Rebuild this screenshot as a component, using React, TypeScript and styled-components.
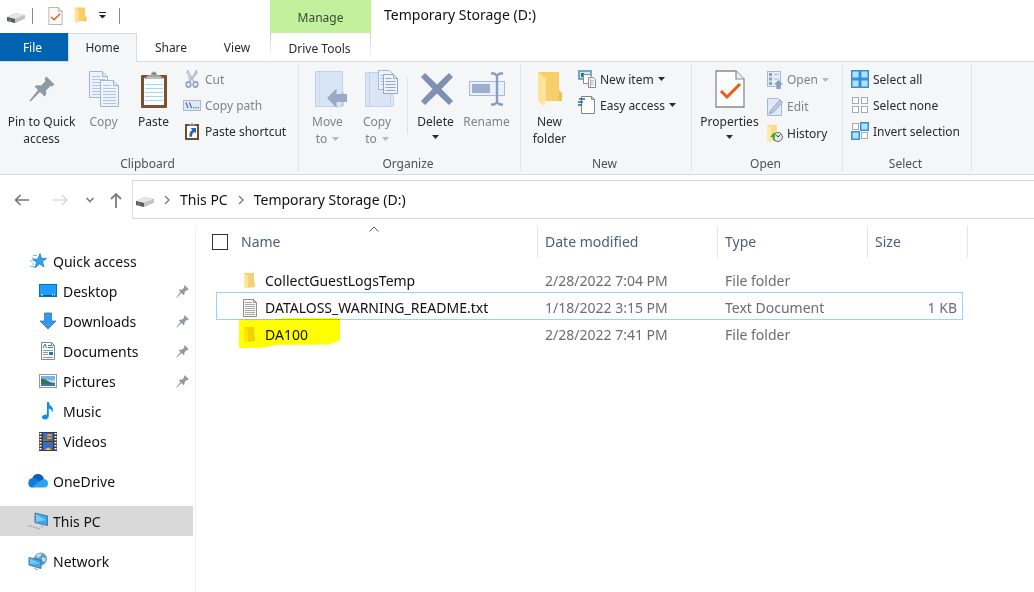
import React from "react";
import styled, { createGlobalStyle } from "styled-components";

const GlobalStyle = createGlobalStyle`
  *, *::before, *::after { box-sizing: border-box; }
  body {
    margin: 0;
    background: #fff;
    color: #111;
    font-family: "Segoe UI", "Noto Sans", "Open Sans", sans-serif;
    font-size: 14px;
    line-height: 20px;
  }
  button {
    font: inherit;
    color: inherit;
    border: 0;
    padding: 0;
    background: none;
  }
  a { color: inherit; text-decoration: none; }
  svg { display: block; flex: none; }
`;

/* ---------- header ---------- */

const Header = styled.header`
  display: flex;
  height: 62px;
  border-bottom: 1px solid #dadbdc;
`;

const HeaderLeft = styled.div`
  width: 270px;
  flex: none;
`;

const QuickToolbar = styled.div`
  display: flex;
  align-items: center;
  height: 33px;
  padding: 0 0 2px 6px;
`;

const ToolButton = styled.button<{ $gap?: number }>`
  display: flex;
  margin-left: ${(p) => p.$gap ?? 0}px;
`;

const ToolDivider = styled.span<{ $gap: number }>`
  width: 1px;
  height: 16px;
  margin-left: ${(p) => p.$gap}px;
  background: #8a8a8a;
`;

const Tabs = styled.div`
  display: grid;
  grid-template-columns: 68px 69px 68px 64px;
  height: 29px;
  font-size: 12px;
`;

const Tab = styled.button<{ $kind?: "file" | "active" }>`
  height: ${(p) => (p.$kind === "active" ? 29 : 28)}px;
  padding-top: ${(p) => (p.$kind === "active" ? 0 : 2)}px;
  padding-right: ${(p) => (p.$kind === "file" ? 3 : 0)}px;
  color: ${(p) => (p.$kind === "file" ? "#fff" : "#2b2b2b")};
  background: ${(p) =>
    p.$kind === "file" ? "#0063b1" : p.$kind === "active" ? "#f5f6f7" : "transparent"};
  border: solid #dadbdc;
  border-width: ${(p) => (p.$kind === "active" ? "1px 1px 0" : "0")};
`;

const ContextTabs = styled.div`
  display: flex;
  flex-direction: column;
  width: 101px;
  font-size: 12px;
  text-align: center;
`;

const ContextTitle = styled.div`
  height: 33px;
  line-height: 35px;
  background: #c2f09c;
  color: #3c4a33;
`;

const ContextTab = styled.button`
  height: 24px;
  padding: 6px 2px 0 0;
  color: #2b2b2b;
  border: solid;
  border-width: 0 1px;
  border-image: linear-gradient(#c4c4c4, #fff) 1;
`;

const Title = styled.h1`
  margin: 0;
  padding: 5px 0 0 13px;
  font-size: 14px;
  font-weight: 400;
  line-height: 20px;
`;

/* ---------- ribbon ---------- */

const Ribbon = styled.section`
  display: flex;
  height: 113px;
  padding: 2px 0 3px;
  background: #f5f6f7;
  border-bottom: 1px solid #dadbdc;
  font-size: 12px;
  line-height: 17px;
  color: #2b2b2b;
`;

const Group = styled.div<{ $width: number }>`
  display: flex;
  flex-direction: column;
  justify-content: space-between;
  width: ${(p) => p.$width}px;
  border-right: 1px solid #e2e3e4;
`;

const GroupBody = styled.div<{ $indent?: number }>`
  display: flex;
  align-items: flex-start;
  height: 91px;
  padding-left: ${(p) => p.$indent ?? 0}px;
`;

const Caption = styled.div`
  padding-right: 3px;
  text-align: center;
  line-height: 15px;
  color: #505050;
`;

const BigButton = styled.button<{ $width: number }>`
  display: flex;
  flex-direction: column;
  align-items: center;
  width: ${(p) => p.$width}px;
  padding-top: 5px;
  white-space: nowrap;
  &:disabled { color: #838383; }
`;

const BigIcon = styled.span`
  display: flex;
  align-items: center;
  height: 40px;
  margin-bottom: 4px;
`;

const WordWithArrow = styled.span`
  display: flex;
  align-items: center;
  gap: 5px;
  min-height: 14px;
`;

const BodyDivider = styled.span`
  width: 1px;
  height: 56px;
  margin: 14px 2px 0 5px;
  background: #e2e3e4;
`;

const SmallColumn = styled.div<{ $row?: number }>`
  display: grid;
  grid-auto-rows: ${(p) => p.$row ?? 26}px;
  padding-top: 2px;
`;

const SmallButton = styled.button`
  display: flex;
  align-items: center;
  gap: 4px;
  white-space: nowrap;
  &:disabled { color: #838383; }
`;

/* ---------- address bar ---------- */

const AddressRow = styled.div`
  display: flex;
  height: 48px;
  padding-top: 5px;
`;

const NavButtons = styled.div`
  display: flex;
  align-items: center;
  width: 132px;
  height: 39px;
  padding-left: 14px;
  flex: none;
`;

const NavButton = styled.button<{ $gap?: number }>`
  display: flex;
  margin-left: ${(p) => p.$gap ?? 0}px;
`;

const Address = styled.nav`
  display: flex;
  align-items: center;
  flex: 1;
  height: 39px;
  padding-left: 2px;
  border: 1px solid #d9d9d9;
  border-right: 0;
`;

const Crumb = styled.a`
  margin: 0 10px 0 9px;
`;

const CrumbArrow = styled.span`
  display: flex;
  margin-left: 9px;
  & + ${Crumb} { margin-left: 10px; }
  ${Crumb} + & { margin-left: 0; }
`;

/* ---------- content ---------- */

const Content = styled.div`
  display: flex;
  padding-top: 3px;
`;

const Sidebar = styled.nav`
  width: 196px;
  flex: none;
  min-height: 366px;
  padding: 20px 2px 0 0;
  border-right: 1px solid #f0f0f0;
`;

const SideItem = styled.a<{ $level?: number; $spaced?: boolean; $current?: boolean }>`
  display: flex;
  align-items: center;
  gap: 5px;
  height: 30px;
  margin-top: ${(p) => (p.$spaced ? 10 : 0)}px;
  padding: 0 4px 0 ${(p) => (p.$level ? 38 : 28)}px;
  background: ${(p) => (p.$current ? "#d9d9d9" : "transparent")};
`;

const SideLabel = styled.span`
  flex: 1;
  padding-top: 2px;
`;

const Files = styled.main`
  flex: 1;
  min-width: 0;
`;

const FileTable = styled.table`
  width: 772px;
  table-layout: fixed;
  border-spacing: 0;
`;

const HeadCell = styled.th`
  padding: 0 0 8px;
  font-weight: 400;
  text-align: left;
  color: #4c607a;
`;

const HeadInner = styled.div<{ $first?: boolean }>`
  position: relative;
  display: flex;
  align-items: center;
  gap: 13px;
  height: 32px;
  padding-left: ${(p) => (p.$first ? 16 : 7)}px;
  border-right: 1px solid #e5e5e5;
`;

const SortMark = styled.svg`
  position: absolute;
  top: 0;
  left: 173px;
`;

const Check = styled.input`
  appearance: none;
  width: 16px;
  height: 16px;
  margin: 0;
  border: 1px solid #333;
  background: #fff;
`;

const Cell = styled.td`
  height: 27px;
  padding: 2px 0 0 7px;
  color: #6d6d6d;
  white-space: nowrap;
`;

const NameCell = styled(Cell)`
  padding-left: 26px;
  color: #111;
`;

const SizeCell = styled(Cell)`
  padding-right: 5px;
  text-align: right;
`;

const Gutter = styled.td`
  padding: 0;
`;

const FileRow = styled.tr<{ $selected?: boolean }>`
  ${(p) =>
    p.$selected &&
    `
    ${Cell} { box-shadow: 0 -1px #99d1ff, inset 0 -1px #99d1ff; }
    ${NameCell} { border-left: 1px solid #99d1ff; padding-left: 25px; }
    ${SizeCell} { border-right: 1px solid #99d1ff; }
  `}
`;

const FileName = styled.span`
  position: relative;
  display: flex;
  align-items: center;
  gap: 7px;
`;

const Marker = styled.svg`
  position: absolute;
  top: -7px;
  left: -3px;
  mix-blend-mode: multiply;
`;

/* ---------- icons ---------- */

const DriveIcon = () => (
  <svg width="20" height="16" viewBox="0 0 20 16">
    <path d="M1 9 9 5 19 7v3.500L9 15 1 13z" fill="#b9b9b9" />
    <path d="M1 9 9 5 19 7 9 11z" fill="#e6e6e6" />
    <path d="M1 9 9 11v4L1 13z" fill="#5c5c5c" />
    <path d="M9 11 19 7v3.500L9 15z" fill="#c4c4c4" />
    <path d="M3 11.500h2V13H3z" fill="#2fc15a" />
  </svg>
);

const PropertiesIcon = ({ width = 30, height = 38 }: { width?: number; height?: number }) => (
  <svg width={width} height={height} viewBox="0 0 30 38">
    <path d="M1 1h20l8 8v28H1z" fill="#fcfcfc" stroke="#8b8b8b" strokeWidth="1.300" />
    <path d="M21 1v8h8" fill="#ececec" stroke="#8b8b8b" strokeWidth="1.200" />
    <path d="M6 21l6 6L25 14" fill="none" stroke="#f0590e" strokeWidth="3" />
  </svg>
);

const FolderIcon = ({ width = 13, height = 18 }: { width?: number; height?: number }) => (
  <svg width={width} height={height} viewBox="0 0 26 36" preserveAspectRatio="none">
    <path d="M1 1h21v18l2 3v8H8z" fill="#f6cf6a" />
    <path d="M22 19v5l-1 6h4v-8z" fill="#edc157" />
    <path d="M1 1l8 6v22l-2 6-6-5z" fill="#ffe497" />
  </svg>
);

const Arrow = () => (
  <svg width="7" height="4" viewBox="0 0 7 4">
    <path d="M0 0h7L3.500 4z" fill="currentColor" />
  </svg>
);

const FaintArrow = () => (
  <svg width="7" height="4" viewBox="0 0 7 4">
    <path d="M0 0h7L3.500 4z" fill="#b9b9b9" />
  </svg>
);

const CustomizeIcon = () => (
  <svg width="8" height="7" viewBox="0 0 8 7">
    <path d="M0 0h7v1H0zM0 3h7L3.500 6.500z" fill="#222" />
  </svg>
);

const PinIcon = ({ size = 26 }: { size?: number }) => (
  <svg width={size} height={size} viewBox="0 0 26 26">
    <path
      d="M17.500 0.500 25.500 8.500 23 10.500 21.500 10 17 14.500Q18 18 15.500 20.500L11 16 2 25 0.500 25.500 1 24 9 14 5.500 10.500Q8 8.500 12 9.500L16.500 5 15.500 3z"
      fill="#8f9aa3"
    />
  </svg>
);

const Sheet = ({ x, y }: { x: number; y: number }) => (
  <g transform={`translate(${x} ${y})`}>
    <path d="M.5.500h13l5 5v21H.5z" fill="#edf3fb" stroke="#9fb3d3" />
    <path d="M13.500.500v5h5" fill="#dfe8f5" stroke="#9fb3d3" />
    <path d="M3 5.500h8M3 8.500h13M3 11.500h13M3 14.500h13M3 17.500h13M3 20.500h13M3 23.500h13" stroke="#b4c4de" />
  </g>
);

const CopyIcon = () => (
  <svg width="30" height="37" viewBox="0 0 30 37">
    <Sheet x={0} y={0} />
    <Sheet x={11} y={9} />
  </svg>
);

const PasteIcon = () => (
  <svg width="26" height="37" viewBox="0 0 26 37">
    <rect x="0" y="4" width="26" height="33" rx="1" fill="#7a5230" />
    <rect x="3" y="7" width="20" height="27" fill="#fafdff" />
    <path d="M4 13.500h18M4 17.500h18M4 21.500h18M4 25.500h18M4 29.500h18" stroke="#a9d4ee" />
    <path d="M4 8q1-4 6-4a3 3.500 0 0 1 6 0q5 0 6 4z" fill="#a6a6a6" />
    <path d="M6 7h14" stroke="#d8d8d8" />
    <circle cx="13" cy="2.800" r="1" fill="#666" />
  </svg>
);

const CutIcon = () => (
  <svg width="18" height="18" viewBox="0 0 18 18">
    <path d="M4.500 0 9 8l4.500-8 .5 3-8 10M4.500 0 4 3l8 10" fill="#c5cfdf" stroke="#a5b4ca" />
    <ellipse cx="5.500" cy="14.500" rx="2.300" ry="2.600" fill="none" stroke="#8fa3c4" strokeWidth="1.600" />
    <ellipse cx="12.500" cy="14.500" rx="2.300" ry="2.600" fill="none" stroke="#8fa3c4" strokeWidth="1.600" />
  </svg>
);

const CopyPathIcon = () => (
  <svg width="18" height="18" viewBox="0 0 18 18">
    <rect x=".5" y="4.500" width="17" height="10" fill="#dfe8f5" stroke="#a8b9d6" />
    <path d="M3 6.500l2 5.500M6.500 6.500l2 5.500" stroke="#5b6f91" strokeWidth="1.200" />
    <path d="M10 11h1.200v1.200H10zM12.400 11h1.200v1.200h-1.200zM14.800 11H16v1.200h-1.200z" fill="#5b6f91" />
  </svg>
);

const PasteShortcutIcon = () => (
  <svg width="18" height="18" viewBox="0 0 18 18">
    <rect x="2" y="2" width="14" height="16" fill="#704c2f" />
    <rect x="4" y="4" width="10" height="12" fill="#fff" />
    <path d="M5 3.500Q6 2 8 2q1-3 2 0 2 0 3 1.500z" fill="#9d9d9d" />
    <path d="M7.500 6H13v5.500l-1.700-1.700q-2.500 1.700-2.300 5H6.500q-.7-4.500 2.800-7z" fill="#2467ad" />
  </svg>
);

const MoveToIcon = () => (
  <svg width="40" height="38" viewBox="-6 0 40 38">
    <path d="M1.500 1.500h27v35h-27z" fill="#d9e5f4" stroke="#c3d2e8" />
    <path d="M5.500 2v34" stroke="#cfdcee" />
    <path d="M27 22h3v14h-3z" fill="#c3d2e8" />
    <path d="M13 28 22.500 18.500V24H33v8H22.500v6z" fill="#9aaac6" />
  </svg>
);

const CopyToIcon = () => (
  <svg width="42" height="38" viewBox="-8 0 42 38">
    <path d="M1.500 2.500h25v34h-25z" fill="#d9e5f4" stroke="#c3d2e8" />
    <path d="M5.500 3v33M26.500 24q3-1 3 3v9h-3z" fill="#dfe9f6" stroke="#c3d2e8" />
    <path d="M14.500.500h11l4 4v15h-15z" fill="#edf3fb" stroke="#a6b8d6" />
    <path d="M16.500 5.500h3M16.500 8.500h3M16.500 11.500h3M16.500 14.500h3" stroke="#a9bbd8" />
    <path d="M19.500 4.500h10l4 4v15h-14z" fill="#edf3fb" stroke="#93a7c9" />
    <path d="M29.500 4.500v4h4" fill="none" stroke="#93a7c9" />
    <path d="M21.500 8.500h6M21.500 11.500h10M21.500 14.500h10M21.500 17.500h10M21.500 20.500h10" stroke="#94a8c9" />
  </svg>
);

const DeleteIcon = () => (
  <svg width="34" height="32" viewBox="-2 0 34 32">
    <path d="M0 4 4 0 16 11.500 28 0 32 4 20.500 16 32 28 28 32 16 20.500 4 32 0 28 11.500 16z" fill="#7f91b3" />
  </svg>
);

const RenameIcon = () => (
  <svg width="36" height="34" viewBox="0 0 36 34">
    <rect x=".5" y="9.500" width="35" height="14" fill="#eaf1fb" stroke="#a8bad8" />
    <rect x="3" y="12" width="18" height="9" fill="#9dafcd" />
    <path d="M22 1.500h3l3 2 3-2h3M28 3.500v27M22 32.500h3l3-2 3 2h3" fill="none" stroke="#8b9dbf" strokeWidth="2.400" />
  </svg>
);

const NewItemIcon = () => (
  <svg width="18" height="18" viewBox="0 0 18 18">
    <rect x="1" y="1" width="12" height="8" fill="#cfeafa" stroke="#4991b8" strokeWidth="1.500" />
    <path d="M3 3h3v4H3z" fill="#2a6e7c" />
    <path d="M5.500 4.500h6l2 2v7h-8z" fill="#fff" stroke="#8a8a8a" />
    <path d="M10.500 7.500h5l2 2v8h-7z" fill="#fff" stroke="#8a8a8a" />
    <path d="M12 10.500h4M12 12.500h4M12 14.500h4" stroke="#9ec4e8" />
    <path d="M12.500 9v8" stroke="#eb9a9a" />
  </svg>
);

const EasyAccessIcon = () => (
  <svg width="18" height="18" viewBox="0 0 18 18">
    <path d="M3.500.500h10l3 3v14h-13z" fill="#fdfdfd" stroke="#858585" />
    <path d="M13.500.500v3h3" fill="none" stroke="#858585" />
    <path d="M1 3h6M0 6h5M-1 9h5" stroke="#1d66a8" strokeWidth="1.400" />
  </svg>
);

const OpenIcon = () => (
  <svg width="16" height="18" viewBox="0 0 16 18">
    <rect x=".5" y=".5" width="13" height="15" fill="#e6eef9" stroke="#a8b9d6" />
    <path d="M2 2h3v3H2zM2 6.500h3v3H2zM2 11h3v3H2z" fill="#8b9fc2" />
    <path d="M7 3.500h5M7 8h5" stroke="#a8b9d6" />
    <path d="M11.500 9 16 13.500h-2.300V18H9.300v-4.500H7z" fill="#8b9fc2" />
  </svg>
);

const EditIcon = () => (
  <svg width="16" height="18" viewBox="0 0 16 18">
    <path d="M.5.500h11l3 3v14H.5z" fill="#e0e9f6" stroke="#a8b9d6" />
    <path d="M2 16l2-4L13 2l2.500 2-9 10z" fill="#bccbe2" stroke="#8fa3c6" />
  </svg>
);

const HistoryIcon = () => (
  <svg width="16" height="18" viewBox="0 0 16 18">
    <path d="M0 0h10v13L3 17l-3-2z" fill="#fbdc86" />
    <path d="M0 0l4 3v13l-1 1-3-2z" fill="#ffeaaa" />
    <circle cx="11" cy="12" r="4.500" fill="#e5e5e5" stroke="#707070" />
    <path d="M11 12 13.500 9.500M11 12 9.500 10" stroke="#444" />
    <path d="M3 12l4-4.500L9 9q-2.500 3-.5 7.500Q6 16 5.500 12z" fill="#3caa3c" />
  </svg>
);

const SelectIcon = ({ on }: { on: boolean[] }) => (
  <svg width="18" height="18" viewBox="0 0 18 18">
    {on.map((lit, i) => {
      const x = (i % 2) * 9;
      const y = Math.floor(i / 2) * 9;
      return lit ? (
        <rect key={i} x={x + 0.75} y={y + 0.75} width="7.500" height="7.500" fill="#b8e0fb" stroke="#2f92de" strokeWidth="1.500" />
      ) : (
        <rect key={i} x={x + 1.5} y={y + 1.5} width="6" height="6" fill="#fff" stroke="#a9a9a9" />
      );
    })}
  </svg>
);

const BackIcon = () => (
  <svg width="16" height="14" viewBox="0 0 16 14">
    <path d="M15 7H1.500M6.500 2 1.500 7 6.500 12" fill="none" stroke="#757575" strokeWidth="1.600" />
  </svg>
);

const ForwardIcon = () => (
  <svg width="16" height="14" viewBox="0 0 16 14">
    <path d="M0 7h14M9 2 14 7 9 12" fill="none" stroke="#dadada" strokeWidth="1.600" />
  </svg>
);

const RecentIcon = () => (
  <svg width="10" height="6" viewBox="0 0 10 6">
    <path d="M1.500 1 5 4.500 8.500 1" fill="none" stroke="#7d7d7d" strokeWidth="1.700" />
  </svg>
);

const UpIcon = () => (
  <svg width="14" height="16" viewBox="0 0 14 16">
    <path d="M7 16V2M2 7 7 2 12 7" fill="none" stroke="#7d7d7d" strokeWidth="1.800" />
  </svg>
);

const ChevronIcon = () => (
  <svg width="6" height="10" viewBox="0 0 6 10">
    <path d="M1 1l4 4-4 4" fill="none" stroke="#7d7d7d" strokeWidth="1.400" />
  </svg>
);

const StarIcon = () => (
  <svg width="20" height="16" viewBox="0 0 20 16">
    <path d="M12 .500l1.500 4.700 5 .2-4 3.200 1.500 5.400-4.300-3-5 4 1.900-5.400-4-3.400 5.200-.2z" fill="#2ca3ea" stroke="#1b78bd" strokeWidth=".7" />
    <path d="M5 2.500h4M4 5h2M2 8h3M4 11h2M2 13.500h4" stroke="#7dbbe6" strokeWidth="1.200" />
  </svg>
);

const DesktopIcon = () => (
  <svg width="20" height="18" viewBox="0 0 20 18">
    <rect x="1.500" y="2.500" width="17" height="12" fill="#1aa0fb" stroke="#0a6fbe" />
    <path d="M2 13h16v1H2z" fill="#0b5d9e" />
    <path d="M3 13h2M14 13h1M16 13h1" stroke="#fff" />
  </svg>
);

const DownloadIcon = () => (
  <svg width="20" height="18" viewBox="0 0 20 18">
    <path d="M6.500 1h7v8h4.500L10 17 2 9h4.500z" fill="#3b95e8" stroke="#2a78c4" strokeWidth=".8" />
  </svg>
);

const DocumentIcon = () => (
  <svg width="20" height="18" viewBox="0 0 20 18">
    <path d="M3.500.500h10l3 3v14h-13z" fill="#fbfbfb" stroke="#8a8a8a" />
    <path d="M13.500.500v3h3" fill="none" stroke="#8a8a8a" />
    <path d="M5 6l2-4 1.500 4M10 3.500h3M10 5.500h5" fill="none" stroke="#2385cc" />
    <path d="M5 8.500h10M5 10.500h5M5 12.500h5M5 15.500h10" stroke="#8b9aa6" />
    <path d="M11 10h4v3h-4z" fill="#2875ad" />
  </svg>
);

const PictureIcon = () => (
  <svg width="20" height="18" viewBox="0 0 20 18">
    <rect x="1.500" y="2.500" width="17" height="13" fill="#fff" stroke="#989898" />
    <path d="M3 4h14v5H3z" fill="#74b6ec" />
    <path d="M3 8h14v6H3z" fill="#b6dcf2" />
    <path d="M3 6.500q4 0 7 2.500t7 2v3H3z" fill="#386e62" />
    <path d="M3 12h14v2H3z" fill="#397b9f" />
  </svg>
);

const MusicIcon = () => (
  <svg width="20" height="18" viewBox="0 0 20 18">
    <path d="M9 0h1.800q.3 3 3 4.800 2.200 2.200.2 6.200.3-4-3.200-4.500V14q-.3 3.300-3.800 3.500Q4 17.300 4 15q.3-2.600 5-2.500z" fill="#0a8fea" />
  </svg>
);

const VideoIcon = () => (
  <svg width="20" height="19" viewBox="0 0 20 19">
    <path d="M1 0h18v19H1z" fill="#3b3b3b" />
    <path d="M2.500 1v17M17.500 1v17" stroke="#fff" strokeWidth="2" strokeDasharray="1.500 1.500" />
    <path d="M5 1h10v8H5zM5 10h10v8H5z" fill="#326ecf" />
    <circle cx="11.500" cy="4.500" r="2.600" fill="#ddb52d" />
    <path d="M9 4h5v1.300H9zM5 6h3v3H5z" fill="#d5372e" />
    <path d="M5 7.500h5v1.500H5z" fill="#4f9d46" />
    <path d="M10 10h4l-2 3z" fill="#c7402a" />
    <path d="M7 18q3.500-5 6 0z" fill="#efc32d" />
  </svg>
);

const OneDriveIcon = () => (
  <svg width="20" height="14" viewBox="0 0 20 14">
    <path d="M4 7a6 6 0 0 1 12-2L11 10z" fill="#0a5fb8" />
    <path d="M3.500 13.500a3.500 4.600 0 0 1 1-9.300q3.500-.5 6 2.300l6 5z" fill="#117ed4" />
    <path d="M3.500 13.500 10 8.500q3-3 6-3.500 4 .5 4 4.500t-4 4z" fill="#2aa4ee" />
  </svg>
);

const PcIcon = () => (
  <svg width="20" height="18" viewBox="0 0 20 18">
    <path d="M7 1l12.500 3v9.500L7 10.500z" fill="#3aa8f1" stroke="#4f7995" />
    <path d="M8 2l10 6-10 2z" fill="#79c9fa" />
    <path d="M11 13l6 1.500-3 1z" fill="#b8c2c9" />
    <path d="M0 13.500l12 3.500" stroke="#a7adb1" strokeWidth="1.300" strokeDasharray="2 .6" />
  </svg>
);

const NetworkIcon = () => (
  <svg width="20" height="18" viewBox="0 0 20 18">
    <circle cx="12.500" cy="7" r="6.500" fill="#5e9cc0" />
    <path d="M8 3q3-3 6-1l-2 3-3 1zM14 5l4 1-1 4-3-1z" fill="#b7dbe8" />
    <path d="M1 5.500l12 3v8l-12-3.500z" fill="#3ea9f0" stroke="#47708d" strokeWidth=".9" />
    <path d="M2 6.500l10 5-10 .5z" fill="#77c7f8" />
    <path d="M5 15.500l6 2-3 .5z" fill="#9aa5ac" />
  </svg>
);

const TextFileIcon = () => (
  <svg width="16" height="18" viewBox="0 0 16 18">
    <path d="M1.500.500h10l3 3v14h-13z" fill="#f8f8f8" stroke="#8f8f8f" />
    <path d="M11.500.500v3h3" fill="none" stroke="#8f8f8f" />
    <path d="M3 3.500h7M3 5.500h10M3 7.500h10M3 9.500h10M3 11.500h10M3 13.500h10M3 15.500h10" stroke="#a9a9a9" />
  </svg>
);

const FolderItemIcon = () => (
  <svg width="16" height="18" viewBox="0 0 16 18">
    <path d="M2 1h10v9l1 1v4L5 16z" fill="#f5d076" />
    <path d="M2 1l4 3v11l-1 2-3-2z" fill="#ffe7a2" />
  </svg>
);

/* ---------- data ---------- */

type SideEntry = {
  label: string;
  icon: React.ReactNode;
  level?: number;
  pinned?: boolean;
  spaced?: boolean;
  current?: boolean;
};

const places: SideEntry[] = [
  { label: "Quick access", icon: <StarIcon /> },
  { label: "Desktop", icon: <DesktopIcon />, level: 1, pinned: true },
  { label: "Downloads", icon: <DownloadIcon />, level: 1, pinned: true },
  { label: "Documents", icon: <DocumentIcon />, level: 1, pinned: true },
  { label: "Pictures", icon: <PictureIcon />, level: 1, pinned: true },
  { label: "Music", icon: <MusicIcon />, level: 1 },
  { label: "Videos", icon: <VideoIcon />, level: 1 },
  { label: "OneDrive", icon: <OneDriveIcon />, spaced: true },
  { label: "This PC", icon: <PcIcon />, spaced: true, current: true },
  { label: "Network", icon: <NetworkIcon />, spaced: true },
];

const files = [
  { name: "CollectGuestLogsTemp", date: "2/28/2022 7:04 PM", type: "File folder", size: "" },
  { name: "DATALOSS_WARNING_README.txt", date: "1/18/2022 3:15 PM", type: "Text Document", size: "1 KB", selected: true },
  { name: "DA100", date: "2/28/2022 7:41 PM", type: "File folder", size: "", marked: true },
];

export default function App() {
  return (
    <>
      <GlobalStyle />
      <Header>
        <HeaderLeft>
          <QuickToolbar>
            <DriveIcon />
            <ToolDivider $gap={6} />
            <ToolButton $gap={15} aria-label="Properties">
              <PropertiesIcon width={15} height={18} />
            </ToolButton>
            <ToolButton $gap={11} aria-label="New folder">
              <FolderIcon width={13} height={17} />
            </ToolButton>
            <ToolButton $gap={12} aria-label="Customize toolbar">
              <CustomizeIcon />
            </ToolButton>
            <ToolDivider $gap={12} />
          </QuickToolbar>
          <Tabs>
            <Tab $kind="file">File</Tab>
            <Tab $kind="active">Home</Tab>
            <Tab>Share</Tab>
            <Tab>View</Tab>
          </Tabs>
        </HeaderLeft>
        <ContextTabs>
          <ContextTitle>Manage</ContextTitle>
          <ContextTab>Drive Tools</ContextTab>
        </ContextTabs>
        <Title>Temporary Storage (D:)</Title>
      </Header>

      <Ribbon>
        <Group $width={299}>
          <GroupBody>
            <BigButton $width={83}>
              <BigIcon><PinIcon /></BigIcon>
              <span>Pin to Quick</span>
              <span>access</span>
            </BigButton>
            <BigButton $width={41} disabled>
              <BigIcon><CopyIcon /></BigIcon>
              <span>Copy</span>
            </BigButton>
            <BigButton $width={59}>
              <BigIcon><PasteIcon /></BigIcon>
              <span>Paste</span>
            </BigButton>
            <SmallColumn>
              <SmallButton disabled><CutIcon />Cut</SmallButton>
              <SmallButton disabled><CopyPathIcon />Copy path</SmallButton>
              <SmallButton><PasteShortcutIcon />Paste shortcut</SmallButton>
            </SmallColumn>
          </GroupBody>
          <Caption>Clipboard</Caption>
        </Group>

        <Group $width={222}>
          <GroupBody $indent={4}>
            <BigButton $width={49} disabled>
              <BigIcon><MoveToIcon /></BigIcon>
              <span>Move</span>
              <WordWithArrow>to <FaintArrow /></WordWithArrow>
            </BigButton>
            <BigButton $width={50} disabled>
              <BigIcon><CopyToIcon /></BigIcon>
              <span>Copy</span>
              <WordWithArrow>to <FaintArrow /></WordWithArrow>
            </BigButton>
            <BodyDivider />
            <BigButton $width={51}>
              <BigIcon><DeleteIcon /></BigIcon>
              <span>Delete</span>
              <WordWithArrow><Arrow /></WordWithArrow>
            </BigButton>
            <BigButton $width={51} disabled>
              <BigIcon><RenameIcon /></BigIcon>
              <span>Rename</span>
            </BigButton>
          </GroupBody>
          <Caption>Organize</Caption>
        </Group>

        <Group $width={171}>
          <GroupBody>
            <BigButton $width={57}>
              <BigIcon><FolderIcon width={26} height={36} /></BigIcon>
              <span>New</span>
              <span>folder</span>
            </BigButton>
            <SmallColumn>
              <SmallButton><NewItemIcon />New item <Arrow /></SmallButton>
              <SmallButton><EasyAccessIcon />Easy access <Arrow /></SmallButton>
            </SmallColumn>
          </GroupBody>
          <Caption>New</Caption>
        </Group>

        <Group $width={151}>
          <GroupBody>
            <BigButton $width={75}>
              <BigIcon><PropertiesIcon /></BigIcon>
              <span>Properties</span>
              <WordWithArrow><Arrow /></WordWithArrow>
            </BigButton>
            <SmallColumn $row={27}>
              <SmallButton disabled><OpenIcon />Open <FaintArrow /></SmallButton>
              <SmallButton disabled><EditIcon />Edit</SmallButton>
              <SmallButton><HistoryIcon />History</SmallButton>
            </SmallColumn>
          </GroupBody>
          <Caption>Open</Caption>
        </Group>

        <Group $width={129}>
          <GroupBody $indent={8}>
            <SmallColumn>
              <SmallButton><SelectIcon on={[true, true, true, true]} />Select all</SmallButton>
              <SmallButton><SelectIcon on={[false, false, false, false]} />Select none</SmallButton>
              <SmallButton><SelectIcon on={[false, true, true, false]} />Invert selection</SmallButton>
            </SmallColumn>
          </GroupBody>
          <Caption>Select</Caption>
        </Group>
      </Ribbon>

      <AddressRow>
        <NavButtons>
          <NavButton aria-label="Back"><BackIcon /></NavButton>
          <NavButton $gap={23} aria-label="Forward" disabled><ForwardIcon /></NavButton>
          <NavButton $gap={16} aria-label="Recent locations"><RecentIcon /></NavButton>
          <NavButton $gap={14} aria-label="Up"><UpIcon /></NavButton>
        </NavButtons>
        <Address aria-label="Address">
          <DriveIcon />
          <CrumbArrow><ChevronIcon /></CrumbArrow>
          <Crumb href="#this-pc">This PC</Crumb>
          <CrumbArrow><ChevronIcon /></CrumbArrow>
          <Crumb href="#drive-d">Temporary Storage (D:)</Crumb>
        </Address>
      </AddressRow>

      <Content>
        <Sidebar aria-label="Places">
          {places.map((p) => (
            <SideItem key={p.label} href="#" $level={p.level} $spaced={p.spaced} $current={p.current}>
              {p.icon}
              <SideLabel>{p.label}</SideLabel>
              {p.pinned && <PinIcon size={13} />}
            </SideItem>
          ))}
        </Sidebar>
        <Files>
          <FileTable>
            <colgroup>
              <col width="20" />
              <col width="322" />
              <col width="180" />
              <col width="150" />
              <col width="95" />
              <col width="5" />
            </colgroup>
            <thead>
              <tr>
                <HeadCell colSpan={2}>
                  <HeadInner $first>
                    <Check type="checkbox" aria-label="Select all files" />
                    Name
                    <SortMark width="10" height="6" viewBox="0 0 10 6">
                      <path d="M.5 5.500 5 1l4.500 4.500" fill="none" stroke="#555" />
                    </SortMark>
                  </HeadInner>
                </HeadCell>
                <HeadCell><HeadInner>Date modified</HeadInner></HeadCell>
                <HeadCell><HeadInner>Type</HeadInner></HeadCell>
                <HeadCell colSpan={2}><HeadInner>Size</HeadInner></HeadCell>
              </tr>
            </thead>
            <tbody>
              {files.map((f) => (
                <FileRow key={f.name} $selected={f.selected}>
                  <Gutter />
                  <NameCell>
                    <FileName>
                      {f.selected ? <TextFileIcon /> : <FolderItemIcon />}
                      {f.name}
                      {f.marked && (
                        <Marker width="101" height="30" viewBox="0 0 101 30">
                          <path d="M0 1.500h34L48 0l40-.5L101 0.500v22l-11 4-53 .5-11 2.500L0 30z" fill="#ff0" />
                        </Marker>
                      )}
                    </FileName>
                  </NameCell>
                  <Cell>{f.date}</Cell>
                  <Cell>{f.type}</Cell>
                  <SizeCell>{f.size}</SizeCell>
                  <Gutter />
                </FileRow>
              ))}
            </tbody>
          </FileTable>
        </Files>
      </Content>
    </>
  );
}
